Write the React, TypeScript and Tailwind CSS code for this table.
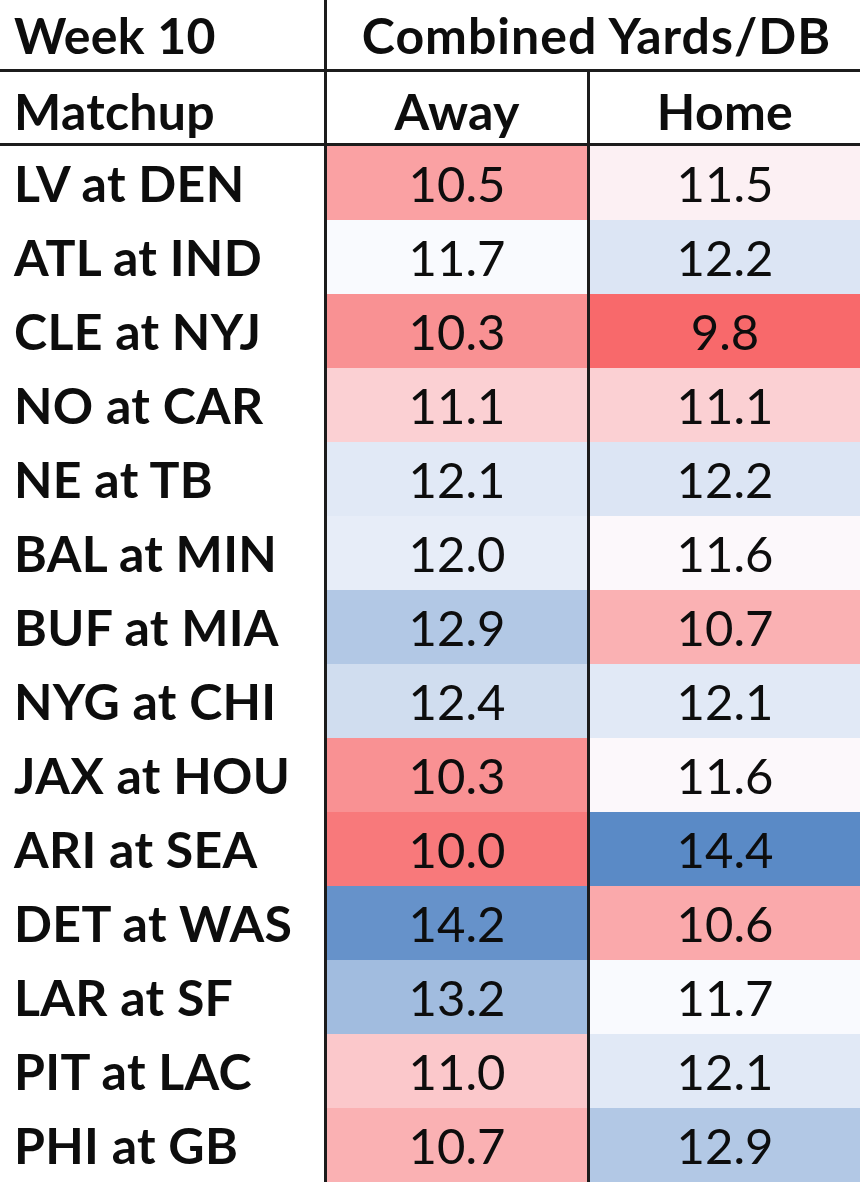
const rows: [string, number, number][] = [
  ['LV at DEN', 10.5, 11.5],
  ['ATL at IND', 11.7, 12.2],
  ['CLE at NYJ', 10.3, 9.8],
  ['NO at CAR', 11.1, 11.1],
  ['NE at TB', 12.1, 12.2],
  ['BAL at MIN', 12.0, 11.6],
  ['BUF at MIA', 12.9, 10.7],
  ['NYG at CHI', 12.4, 12.1],
  ['JAX at HOU', 10.3, 11.6],
  ['ARI at SEA', 10.0, 14.4],
  ['DET at WAS', 14.2, 10.6],
  ['LAR at SF', 13.2, 11.7],
  ['PIT at LAC', 11.0, 12.1],
  ['PHI at GB', 10.7, 12.9],
];

// excel-style red / white / blue scale
const MIN = 9.8;
const MAX = 14.4;
const MID = 11.65;

function scale(v: number) {
  const white = [252, 252, 255];
  const red = [248, 105, 107];
  const blue = [90, 138, 198];
  let to = red;
  let t = 0;
  if (v <= MID) {
    t = (MID - v) / (MID - MIN);
  } else {
    to = blue;
    t = (v - MID) / (MAX - MID);
  }
  const c = white.map((w, i) => Math.round(w + (to[i] - w) * t));
  return `rgb(${c[0]}, ${c[1]}, ${c[2]})`;
}

export default function App() {
  return (
    <div className="w-[860px] h-[1182px] overflow-hidden bg-white text-[#0d0d0d] font-['Lato',sans-serif]">
      <div className="flex h-[72px] border-b-[3px] border-[#1c1c1c]">
        <div className="w-[327px] border-r-[3px] border-[#1c1c1c] flex items-center pl-[14px] text-[50px] font-bold tracking-[0.3px] leading-none">
          Week 10
        </div>
        <div className="flex-1 flex items-center justify-center pl-[6px] text-[50px] font-bold tracking-[1px] leading-none">
          Combined Yards/DB
        </div>
      </div>

      <div className="flex h-[74px] border-b-[3px] border-[#1c1c1c]">
        <div className="w-[327px] border-r-[3px] border-[#1c1c1c] flex items-center pl-[14px] pt-[6px] text-[50px] font-bold tracking-[0.3px] leading-none">
          Matchup
        </div>
        <div className="w-[263px] border-r-[3px] border-[#1c1c1c] flex items-center justify-center pt-[6px] text-[50px] font-bold tracking-[0.3px] leading-none">
          Away
        </div>
        <div className="flex-1 flex items-center justify-center pt-[6px] text-[50px] font-bold tracking-[0.3px] leading-none">
          Home
        </div>
      </div>

      {rows.map(([match, away, home]) => (
        <div key={match} className="flex h-[74px]">
          <div className="w-[327px] border-r-[3px] border-[#1c1c1c] flex items-center pl-[14px] text-[50px] font-bold tracking-[0.3px] leading-none">
            {match}
          </div>
          <div
            className="w-[263px] border-r-[3px] border-[#1c1c1c] flex items-center justify-center text-[49px] leading-none"
            style={{ backgroundColor: scale(away) }}
          >
            {away.toFixed(1)}
          </div>
          <div
            className="flex-1 flex items-center justify-center text-[49px] leading-none"
            style={{ backgroundColor: scale(home) }}
          >
            {home.toFixed(1)}
          </div>
        </div>
      ))}
    </div>
  );
}
